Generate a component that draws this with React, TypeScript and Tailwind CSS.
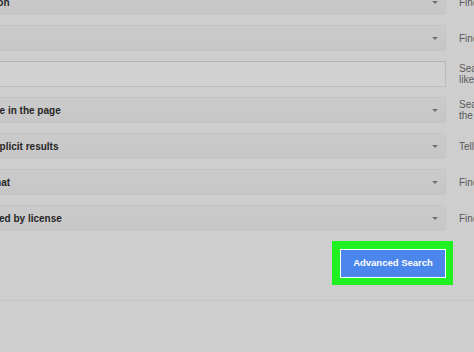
import React from 'react';

const rows: { kind: 'select' | 'input'; value: string; hint: string[] }[] = [
    { kind: 'select', value: 'any region', hint: ['Find'] },
    { kind: 'select', value: 'anytime', hint: ['Find'] },
    { kind: 'input', value: '', hint: ['Search', 'like'] },
    { kind: 'select', value: 'anywhere in the page', hint: ['Search', 'the'] },
    { kind: 'select', value: 'Show explicit results', hint: ['Tell'] },
    { kind: 'select', value: 'any format', hint: ['Find'] },
    { kind: 'select', value: 'not filtered by license', hint: ['Find'] },
];

const Caret = () => (
    <svg width="6" height="3" viewBox="0 0 6 3" className="shrink-0 mr-[1px]">
        <path d="M0 0h6L3 3z" fill="#707070" />
    </svg>
);

export default function App() {
    return (
        <div className="w-[474px] h-[352px] overflow-hidden bg-[#cecece] font-['Liberation_Sans',Arial,sans-serif]">
            {/* Form rows */}
            <div className="-mt-[11px] flex flex-col gap-[10px]">
                {rows.map((row, i) => (
                    <div key={i} className="flex items-center">
                        {row.kind === 'select' ? (
                            <div className="-ml-[52px] w-[498px] h-[26px] shrink-0 flex items-center justify-between pl-[10px] pr-[6px] rounded-[3px] border border-[#c4c4c4] bg-gradient-to-b from-[#cbcbcb] to-[#c6c6c6]">
                                <span className="text-[10px] font-bold text-[#262626] whitespace-nowrap">{row.value}</span>
                                <Caret />
                            </div>
                        ) : (
                            <div className="-ml-[52px] w-[498px] h-[26px] shrink-0 border border-[#bcbcbc] border-t-[#b2b2b2] bg-[#d1d1d1]" />
                        )}
                        <div className="ml-[13px] text-[10px] leading-[11px] text-[#5a5a5a] whitespace-nowrap">
                            {row.hint.map((h, j) => (
                                <div key={j}>{h}</div>
                            ))}
                        </div>
                    </div>
                ))}
            </div>

            {/* Submit */}
            <div className="flex justify-end pr-[21px] mt-[10px]">
                <div className="bg-[#1ff01f] pl-[8px] pt-[8px] pr-[7px] pb-[7px]">
                    <button className="w-[106px] h-[29px] border border-white bg-[#4b86ec] text-white text-[9.5px] font-bold">
                        Advanced Search
                    </button>
                </div>
            </div>

            <div className="mt-[15px] border-t border-[#c6c6c6]" />
        </div>
    );
}
